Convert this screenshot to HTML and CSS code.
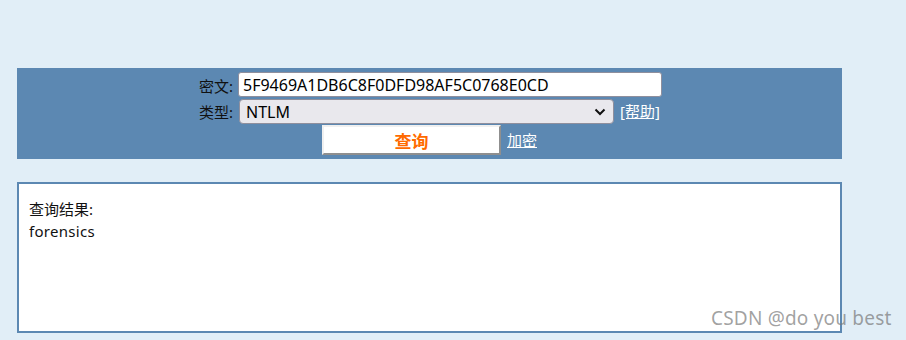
FILE: index.html
```html
<!DOCTYPE html>
<html lang="zh-CN">
<head>
  <meta charset="UTF-8">
  <title>NTLM 查询</title>
  <link rel="stylesheet" href="styles.css">
</head>
<body>
  <div class="page">
    <!-- 查询表单 -->
    <form class="query-panel">
      <label class="label">密文:</label>
      <div class="field">
        <input class="hash-input" type="text" value="5F9469A1DB6C8F0DFD98AF5C0768E0CD">
      </div>

      <label class="label">类型:</label>
      <div class="field">
        <div class="select-box">
          <span>NTLM</span>
          <svg class="arrow" width="12" height="8" viewBox="0 0 12 8"><path d="M1.5 1.5 L6 6 L10.5 1.5" fill="none" stroke="#111" stroke-width="2"/></svg>
        </div>
        <a class="link" href="#">[帮助]</a>
      </div>

      <div class="actions">
        <button class="btn-query" type="button">查询</button>
        <a class="link link-enc" href="#">加密</a>
      </div>
    </form>

    <!-- 结果 -->
    <div class="result">
      <div>查询结果:</div>
      <div class="result-text">forensics</div>
    </div>
  </div>
  <div class="watermark">CSDN @do you best</div>
</body>
</html>
```
FILE: styles.css
```css
body {
  margin: 0;
  background: #e1eef7;
  font-family: "Noto Sans", "Noto Sans CJK SC", sans-serif;
  width: 906px;
  height: 340px;
  position: relative;
  overflow: hidden;
}

.page {
  padding: 68px 0 0 17px;
  width: 825px;
}

.query-panel {
  background: #5c88b2;
  margin: 0;
  padding: 4px 0;
  height: 83px;
  display: grid;
  grid-template-columns: 42px 425px;
  grid-template-rows: 27px 26px 30px;
  justify-content: center;
}

.label {
  font-size: 15px;
  color: #111;
  padding-right: 5px;
  text-align: right;
  align-self: center;
  line-height: 20px;
  white-space: nowrap;
}

.field {
  display: flex;
  align-items: flex-start;
}

.hash-input {
  width: 424px;
  height: 25px;
  box-sizing: border-box;
  border: 1px solid #8f8f9d;
  border-radius: 3px;
  padding: 0 4px;
  font-family: "Noto Sans", sans-serif;
  font-size: 16px;
  color: #000;
  background: #fff;
  margin: 0;
}

.select-box {
  width: 375px;
  height: 25px;
  margin-left: 1px;
  box-sizing: border-box;
  background: #e9e8ed;
  border: 1px solid #8f8f9d;
  border-radius: 4px;
  display: flex;
  align-items: center;
  justify-content: space-between;
  padding: 0 7px 0 6px;
  font-size: 16px;
  color: #000;
}

.arrow {
  display: block;
}

.link {
  color: #fff;
  font-size: 15px;
  margin-left: 6px;
  text-decoration: underline;
  line-height: 25px;
}

.actions {
  grid-column: 1 / 3;
  display: flex;
  justify-content: center;
  align-items: flex-start;
}

.btn-query {
  width: 179px;
  height: 30px;
  background: #fff;
  border: 2px solid;
  border-color: #f0f0f0 #8f8f8f #8f8f8f #f0f0f0;
  color: #ff6a00;
  font-family: "Noto Sans CJK SC", sans-serif;
  font-size: 17px;
  font-weight: bold;
  padding: 0;
}

.link-enc {
  margin-left: 6px;
  margin-top: 4px;
  line-height: 22px;
}

.result {
  margin-top: 23px;
  height: 151px;
  box-sizing: border-box;
  border: 2px solid #5c88b2;
  background: #fff;
  padding: 14px 10px;
  font-size: 15px;
  color: #111;
  line-height: 22px;
}

.result-text {
  font-size: 15px;
  letter-spacing: 0.3px;
}

.watermark {
  position: absolute;
  left: 711px;
  top: 305px;
  font-family: "Noto Sans", sans-serif;
  font-size: 19px;
  letter-spacing: 0.2px;
  color: rgba(120, 120, 120, 0.7);
}
```
